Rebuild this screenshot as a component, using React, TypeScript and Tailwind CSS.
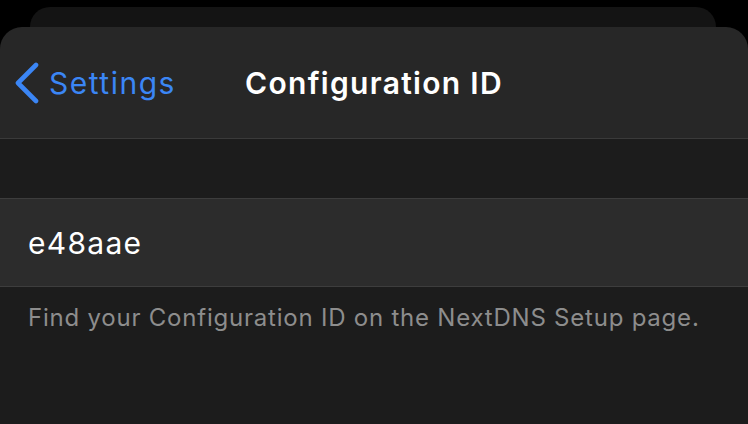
import React from 'react';

const font = { fontFamily: 'Inter, "Noto Sans", sans-serif' };

const BackChevron: React.FC = () => (
  <svg width="26" height="42" viewBox="0 0 26 42" fill="none" className="shrink-0">
    <polyline
      points="22,3 4,21 22,39"
      stroke="#3b86f5"
      strokeWidth="4.6"
      strokeLinecap="round"
      strokeLinejoin="round"
    />
  </svg>
);

export default function App() {
  return (
    <div className="w-[748px] h-[424px] bg-black overflow-hidden flex flex-col pt-[7px]" style={font}>
      {/* card stacked behind */}
      <div className="ml-[30px] mr-[32px] h-[20px] rounded-t-[20px] bg-[#141414]" />

      {/* front sheet */}
      <div className="flex-1 flex flex-col rounded-t-[22px] bg-[#272727] overflow-hidden">
        <div className="h-[112px] grid grid-cols-[1fr_auto_1fr] items-center border-b border-[#3a3a3a]">
          <button className="flex items-center gap-[9px] pl-[14px] pt-[1px] text-[#3b86f5] text-[30px] leading-none tracking-[1.5px]">
            <BackChevron />
            <span>Settings</span>
          </button>
          <h1 className="text-white text-[30px] font-semibold leading-none tracking-[1.3px] pt-[1px]">
            Configuration ID
          </h1>
          <div />
        </div>

        <div className="h-[60px] bg-[#1c1c1c] border-b border-[#3d3d3d]" />

        <div className="h-[88px] bg-[#2c2c2c] border-b border-[#3d3d3d] flex items-center px-[28px]">
          <span className="text-white text-[30px] leading-none tracking-[1.3px]">e48aae</span>
        </div>

        <div className="flex-1 bg-[#1c1c1c] px-[28px] pt-[16px]">
          <p className="text-[#8d8d8d] text-[24px] leading-[30px] tracking-[0.78px] whitespace-nowrap">
            Find your Configuration ID on the NextDNS Setup page.
          </p>
        </div>
      </div>
    </div>
  );
}
